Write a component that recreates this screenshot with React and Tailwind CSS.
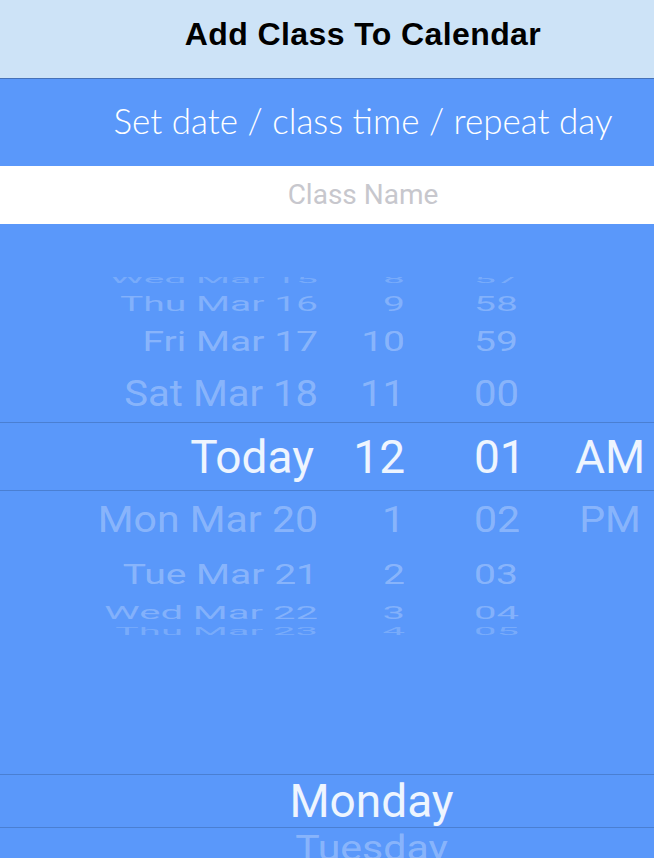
const wheel = [
  { date: 'Wed Mar 15', hour: '8', min: '57', ampm: '', row: 'h-[19px]', text: 'text-[39px] scale-y-[0.3] text-white/20' },
  { date: 'Thu Mar 16', hour: '9', min: '58', ampm: '', row: 'h-[30px]', text: 'text-[39px] scale-y-[0.5] text-white/25' },
  { date: 'Fri Mar 17', hour: '10', min: '59', ampm: '', row: 'h-[47px]', text: 'text-[39px] scale-y-[0.7] text-white/30' },
  { date: 'Sat Mar 18', hour: '11', min: '00', ampm: '', row: 'h-[56px]', text: 'text-[40px] scale-y-[0.9] text-white/30' },
]

const below = [
  { date: 'Mon Mar 20', hour: '1', min: '02', ampm: 'PM', row: 'h-[57px]', text: 'text-[41px] scale-y-[0.9] text-white/30' },
  { date: 'Tue Mar 21', hour: '2', min: '03', ampm: '', row: 'h-[54px]', text: 'text-[39px] scale-y-[0.7] text-white/30' },
  { date: 'Wed Mar 22', hour: '3', min: '04', ampm: '', row: 'h-[22px]', text: 'text-[40px] scale-y-[0.45] text-white/25' },
  { date: 'Thu Mar 23', hour: '4', min: '05', ampm: '', row: 'h-[16px]', text: 'text-[40px] scale-y-[0.25] text-white/20' },
]

const WheelRow = ({ item }) => (
  <div className={`flex items-center ${item.row}`}>
    <div className={`flex w-full leading-none ${item.text}`}>
      <div className="w-[318px] text-right whitespace-nowrap">{item.date}</div>
      <div className="w-[87px] text-right">{item.hour}</div>
      <div className="w-[165px] pl-[69px]">{item.min}</div>
      <div className="w-[80px] text-center">{item.ampm}</div>
    </div>
  </div>
)

export default function App() {
  return (
    <div className="w-[654px] h-[858px] overflow-hidden bg-[#5a98fa] font-['Roboto',sans-serif]">
      {/* nav bar */}
      <div className="h-[79px] bg-[#cde3f7] border-b border-[#4672b8] flex items-center justify-center pl-[72px] pb-[10px]">
        <h1 className="font-['Liberation_Sans',Arial,sans-serif] font-bold text-[32px] text-black tracking-[0.4px]">
          Add Class To Calendar
        </h1>
      </div>

      <div className="h-[87px] flex items-center justify-center pl-[72px] pb-[5px]">
        <p className="font-['Lato',sans-serif] font-light text-[35px] text-white">
          Set date / class time / repeat day
        </p>
      </div>

      <div className="h-[58px] bg-white flex items-center justify-center pl-[72px]">
        <span className="text-[28px] text-[#c7c7cd]">Class Name</span>
      </div>

      {/* date + time picker */}
      <div className="h-[550px] pt-[53px]">
        <div className="h-[358px] overflow-hidden">
          <div className="-mt-[7px]">
            {wheel.map((item) => (
              <WheelRow key={item.date} item={item} />
            ))}
            <div className="h-[69px] border-y border-[#4a7fd2] flex items-center">
              <div className="flex w-full leading-none text-[46px] text-white/90">
                <div className="w-[318px] pr-[4px] text-right">Today</div>
                <div className="w-[87px] text-right">12</div>
                <div className="w-[165px] pl-[69px]">01</div>
                <div className="w-[80px] text-center">AM</div>
              </div>
            </div>
            {below.map((item) => (
              <WheelRow key={item.date} item={item} />
            ))}
          </div>
        </div>
      </div>

      {/* repeat day picker */}
      <div className="border-t border-[#4a7fd2]">
        <div className="h-[53px] border-b border-[#4a7fd2] flex items-center justify-center pl-[89px]">
          <span className="text-[46px] leading-none text-white/90">Monday</span>
        </div>
        <div className="h-[40px] flex items-center justify-center pl-[89px]">
          <span className="text-[41px] leading-none text-white/30 scale-y-[0.85]">Tuesday</span>
        </div>
      </div>
    </div>
  )
}
